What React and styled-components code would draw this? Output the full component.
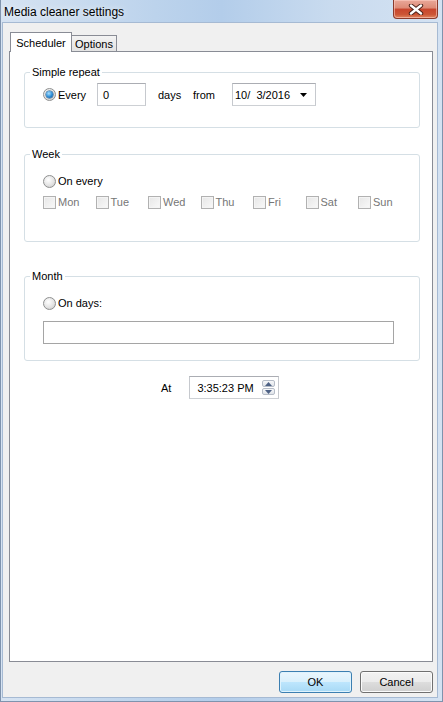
import React from "react";
import styled, { createGlobalStyle, css } from "styled-components";

const GlobalStyle = createGlobalStyle`
  html, body {
    margin: 0;
    padding: 0;
  }
  body {
    font-family: "Liberation Sans", Arial, sans-serif;
    font-size: 11px;
    color: #000;
  }
  * {
    box-sizing: border-box;
  }
`;

const Window = styled.div`
  width: 443px;
  height: 702px;
  display: flex;
  flex-direction: column;
  background: linear-gradient(to right, #d6e3f2 0%, #bcd3ec 35%, #b3cdea 50%, #c9dbef 75%, #d4e2f2 100%);
  border: 1px solid #7f93ad;
  border-top: none;
`;

const TitleBar = styled.div`
  height: 23px;
  flex: none;
  display: flex;
  justify-content: space-between;
  align-items: flex-start;
  padding: 0 4px 0 3px;
`;

const Title = styled.div`
  font-size: 12px;
  line-height: 24px;
  color: #000;
  text-shadow: 0 0 6px rgba(255, 255, 255, 0.9);
`;

const CloseButton = styled.div`
  width: 45px;
  height: 19px;
  display: flex;
  align-items: center;
  justify-content: center;
  border: 1px solid #8a3a2c;
  border-top: none;
  border-radius: 0 0 4px 4px;
  background: linear-gradient(
    to bottom,
    #e9a899 0%,
    #dd8a76 45%,
    #c8452d 50%,
    #cc5536 80%,
    #e0855f 100%
  );
  box-shadow: inset 0 0 0 1px rgba(255, 210, 200, 0.55);
`;

const Body = styled.div`
  flex: 1;
  display: flex;
  flex-direction: column;
  margin: 0 5px 4px 2px;
  padding: 9px 4px 0 6px;
  background: #f0f0f0;
  box-shadow: 0 0 0 1px #a6bad3;
`;

const TabStrip = styled.div`
  height: 20px;
  display: flex;
  align-items: flex-end;
  padding-left: 1px;
  margin-bottom: -1px;
  position: relative;
  z-index: 1;
`;

const Tab = styled.div`
  width: ${(p) => p.$width}px;
  display: flex;
  align-items: center;
  justify-content: center;
  border: 1px solid #898c95;
  border-bottom: none;
  ${(p) =>
    p.$active
      ? css`
          height: 20px;
          background: #fff;
          position: relative;
          z-index: 1;
        `
      : css`
          height: 16px;
          margin-left: -1px;
          margin-bottom: 1px;
          padding-top: 1px;
          background: linear-gradient(to bottom, #f3f3f3, #e3e3e3);
        `}
`;

const Panel = styled.div`
  flex: 1;
  background: #fff;
  border: 1px solid #898c95;
  padding: 13px 12px 0 14px;
`;

const GroupBox = styled.fieldset`
  margin: ${(p) => p.$mt || 0}px 0 0;
  padding: 0;
  min-width: 0;
  border: 1px solid #d5dfe5;
  border-radius: 3px;
`;

const Legend = styled.legend`
  margin-left: 5px;
  padding: 0 2px;
  line-height: 14px;
`;

const GroupBody = styled.div`
  padding: ${(p) => p.$pad};
`;

const Row = styled.div`
  display: flex;
  align-items: center;
  height: ${(p) => p.$h || 16}px;
  margin-top: ${(p) => p.$mt || 0}px;
`;

const Option = styled.label`
  display: flex;
  align-items: center;
  gap: 2px;
  width: ${(p) => (p.$width ? `${p.$width}px` : "auto")};
  flex: none;
  color: ${(p) => (p.$disabled ? "#767676" : "#000")};
`;

const Radio = styled.span`
  width: 13px;
  height: 13px;
  flex: none;
  border-radius: 50%;
  border: 1px solid #8e8f8f;
  background: radial-gradient(circle at 40% 35%, #ffffff 0%, #e4e4e4 55%, #c4c4c4 100%);
  position: relative;
  ${(p) =>
    p.$checked &&
    css`
      &::after {
        content: "";
        position: absolute;
        left: 2px;
        top: 2px;
        width: 7px;
        height: 7px;
        border-radius: 50%;
        background: radial-gradient(circle at 40% 35%, #a9e0ff 0%, #2a8ad4 55%, #0f4f8f 100%);
        box-shadow: 0 0 0 0.5px #1d4f7c;
      }
    `}
`;

const Checkbox = styled.span`
  width: 13px;
  height: 13px;
  flex: none;
  border: 1px solid #b1b1b1;
  background: linear-gradient(135deg, #e6e6e6 0%, #f9f9f9 100%);
  box-shadow: inset 0 0 0 1px #f4f4f4;
`;

const TextBox = styled.div`
  width: ${(p) => p.$width}px;
  height: 23px;
  flex: none;
  display: flex;
  align-items: center;
  padding-left: ${(p) => p.$pl || 5}px;
  background: #fff;
  border: 1px solid;
  border-color: ${(p) => (p.$dark ? "#a5a5a5" : "#abadb3 #c6c9ce #cdd0d4 #c6c9ce")};
  white-space: pre;
`;

const Caption = styled.span`
  width: ${(p) => p.$width}px;
  margin-left: ${(p) => p.$ml || 0}px;
  flex: none;
`;

const DropArrow = styled.svg`
  margin-left: auto;
  margin-right: 8px;
`;

const DayGrid = styled.div`
  display: grid;
  grid-template-columns: repeat(7, 52.5px);
  height: 16px;
  align-items: center;
  margin-top: 5px;
`;

const AtRow = styled.div`
  display: flex;
  align-items: center;
  gap: 18px;
  margin-top: 15px;
  padding-left: 137px;
`;

const Spinner = styled.div`
  margin-left: auto;
  margin-right: 3px;
  width: 13px;
  display: flex;
  flex-direction: column;
  gap: 1px;
`;

const SpinButton = styled.div`
  height: 7px;
  display: flex;
  align-items: center;
  justify-content: center;
  border: 1px solid #b5bcc7;
  border-radius: 2px;
  background: linear-gradient(to bottom, #f7f8fa, #dfe3e8);
`;

const Footer = styled.div`
  flex: none;
  display: flex;
  justify-content: flex-end;
  gap: 8px;
  padding: 9px 0 4px;
`;

const Button = styled.div`
  width: 73px;
  height: 22px;
  display: flex;
  align-items: center;
  justify-content: center;
  border-radius: 3px;
  ${(p) =>
    p.$default
      ? css`
          border: 1px solid #3c7fb1;
          background: linear-gradient(to bottom, #eaf6fd 0%, #d9f0fc 50%, #bee6fd 50%, #a7d9f5 100%);
          box-shadow: inset 0 0 0 1px #dff3fd;
        `
      : css`
          border: 1px solid #707070;
          background: linear-gradient(to bottom, #f2f2f2 0%, #ebebeb 50%, #dddddd 50%, #cfcfcf 100%);
          box-shadow: inset 0 0 0 1px #fbfbfb;
        `}
`;

const days = ["Mon", "Tue", "Wed", "Thu", "Fri", "Sat", "Sun"];

const CloseGlyph = () => (
  <svg width="16" height="11" viewBox="0 0 16 11">
    <path d="M3 1.5 L13 9.5 M13 1.5 L3 9.5" stroke="#4a2018" strokeWidth="4.4" strokeLinecap="round" />
    <path d="M3 1.5 L13 9.5 M13 1.5 L3 9.5" stroke="#ffffff" strokeWidth="2.4" strokeLinecap="round" />
  </svg>
);

const Triangle = ({ up }) => (
  <svg width="7" height="4" viewBox="0 0 7 4">
    <polygon points={up ? "0,4 7,4 3.5,0" : "0,0 7,0 3.5,4"} fill="#4d6185" />
  </svg>
);

export default function App() {
  return (
    <>
      <GlobalStyle />
      <Window>
        <TitleBar>
          <Title>Media cleaner settings</Title>
          <CloseButton>
            <CloseGlyph />
          </CloseButton>
        </TitleBar>
        <Body>
          <TabStrip>
            <Tab $active $width={62}>Scheduler</Tab>
            <Tab $width={46}>Options</Tab>
          </TabStrip>
          <Panel>
            <GroupBox>
              <Legend>Simple repeat</Legend>
              <GroupBody $pad="4px 0 21px 18px">
                <Row $h={23}>
                  <Option $width={54}>
                    <Radio $checked />
                    Every
                  </Option>
                  <TextBox $width={49}>0</TextBox>
                  <Caption $ml={12} $width={35}>days</Caption>
                  <Caption $width={39}>from</Caption>
                  <TextBox $width={84} $pl={2}>
                    {"10/  3/2016"}
                    <DropArrow width="7" height="4" viewBox="0 0 7 4">
                      <polygon points="0,0 7,0 3.5,4" fill="#000" />
                    </DropArrow>
                  </TextBox>
                </Row>
              </GroupBody>
            </GroupBox>

            <GroupBox $mt={19}>
              <Legend>Week</Legend>
              <GroupBody $pad="12px 0 31px 18px">
                <Row>
                  <Option>
                    <Radio />
                    On every
                  </Option>
                </Row>
                <DayGrid>
                  {days.map((d) => (
                    <Option key={d} $disabled>
                      <Checkbox />
                      {d}
                    </Option>
                  ))}
                </DayGrid>
              </GroupBody>
            </GroupBox>

            <GroupBox $mt={27}>
              <Legend>Month</Legend>
              <GroupBody $pad="12px 0 16px 18px">
                <Row>
                  <Option>
                    <Radio />
                    On days:
                  </Option>
                </Row>
                <Row $h={23} $mt={10}>
                  <TextBox $width={351} $dark />
                </Row>
              </GroupBody>
            </GroupBox>

            <AtRow>
              <span>At</span>
              <TextBox $width={90} $pl={7}>
                3:35:23 PM
                <Spinner>
                  <SpinButton>
                    <Triangle up />
                  </SpinButton>
                  <SpinButton>
                    <Triangle />
                  </SpinButton>
                </Spinner>
              </TextBox>
            </AtRow>
          </Panel>
          <Footer>
            <Button $default>OK</Button>
            <Button>Cancel</Button>
          </Footer>
        </Body>
      </Window>
    </>
  );
}
